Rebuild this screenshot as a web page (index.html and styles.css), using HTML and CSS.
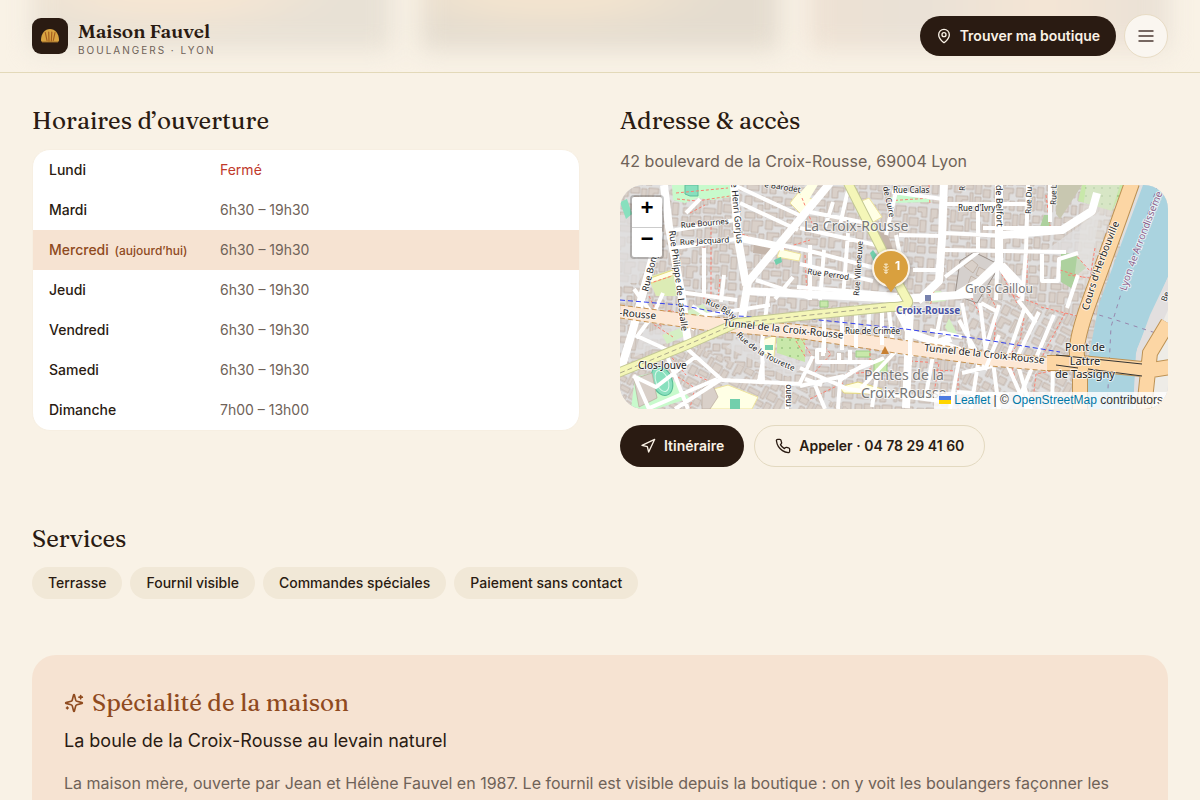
FILE: index.html
```html
<!DOCTYPE html>
<html lang="fr">
<head>
<meta charset="utf-8">
<meta name="viewport" content="width=device-width, initial-scale=1">
<title>Maison Fauvel – Croix-Rousse</title>
<link rel="stylesheet" href="styles.css">
</head>
<body>
<header class="site-header">
  <div class="header-glow" aria-hidden="true"><i class="glow-a"></i><i class="glow-b"></i><i class="glow-c"></i></div>
  <a class="brand" href="#">
    <svg class="brand-mark" viewBox="0 0 36 36" aria-hidden="true">
      <rect width="36" height="36" rx="9" fill="#2a1b12"/>
      <path d="M9 22c0-6.500 4-11 9-11s9 4.500 9 11c0 1.500-.8 2-2 2H11c-1.200 0-2-.5-2-2z" fill="#d9a441"/>
      <path d="M13.300 14.500l1.700 8M16.700 14.200l.3 8.800M19.800 14.200l-.5 8.800M23 14.500l-1.700 8" stroke="#a55f20" stroke-width="1.200" stroke-linecap="round"/>
      <path d="M10 24h16" stroke="#9b6a28" stroke-width="1"/>
    </svg>
    <span class="brand-text"><span class="brand-name">Maison Fauvel</span><span class="brand-sub">BOULANGERS · LYON</span></span>
  </a>
  <div class="header-actions">
    <a class="btn btn-dark btn-find" href="#"><svg class="icon" viewBox="0 0 24 24" aria-hidden="true"><path d="M20 10c0 4.990-5.540 10.190-7.400 11.800a1 1 0 0 1-1.200 0C9.540 20.190 4 14.990 4 10a8 8 0 0 1 16 0"/><circle cx="12" cy="10" r="3"/></svg>Trouver ma boutique</a>
    <button class="menu-btn" type="button" aria-label="Menu"><svg viewBox="0 0 24 24" aria-hidden="true"><path d="M3 6h18M3 12h18M3 18h18"/></svg></button>
  </div>
</header>
<main class="page">
  <div class="columns">
    <section>
      <h2>Horaires d’ouverture</h2>
      <div class="hours-card">
        <table class="hours">
          <tbody>
          <tr><th scope="row">Lundi</th><td class="closed">Fermé</td></tr>
          <tr><th scope="row">Mardi</th><td>6h30 – 19h30</td></tr>
          <tr class="today"><th scope="row">Mercredi <span>(aujourd’hui)</span></th><td>6h30 – 19h30</td></tr>
          <tr><th scope="row">Jeudi</th><td>6h30 – 19h30</td></tr>
          <tr><th scope="row">Vendredi</th><td>6h30 – 19h30</td></tr>
          <tr><th scope="row">Samedi</th><td>6h30 – 19h30</td></tr>
          <tr><th scope="row">Dimanche</th><td>7h00 – 13h00</td></tr>
          </tbody>
        </table>
      </div>
    </section>
    <section>
      <h2>Adresse &amp; accès</h2>
      <p class="address">42 boulevard de la Croix-Rousse, 69004 Lyon</p>
      <div class="map">
        <svg class="map-canvas" viewBox="0 0 548 224" preserveAspectRatio="xMidYMid slice" role="img" aria-label="Plan de la Croix-Rousse">
          <defs>
            <pattern id="bld" width="62" height="50" patternUnits="userSpaceOnUse" patternTransform="rotate(4)">
              <path class="bld" d="M2 2h7v9h-4v4H2zM11 1h9v6h-9zM22 2h5v12h-5zM29 1h10v5h-5v6h-5zM42 2h7v7h-7zM51 1h9v10h-5V6h-4zM3 18h10v6H3zM15 10h5v13h-5zM23 17h12v5H23zM37 9h4v13h-4zM43 12h9v8h-9zM54 14h6v12h-6zM2 27h6v10H2zM10 26h11v5h-4v7h-7zM24 25h7v9h-7zM33 25h10v5H33zM45 23h6v11h-6zM53 29h7v8h-7zM3 40h12v6H3zM18 39h5v9h-5zM26 37h12v4h-6v7h-6zM40 33h3v14h-3zM45 37h6v9h-6zM53 40h8v7h-8z"/>
            </pattern>
            <pattern id="bldTilt" width="62" height="50" patternUnits="userSpaceOnUse" patternTransform="rotate(28)" href="#bld"/>
            <pattern id="trees" width="8" height="8" patternUnits="userSpaceOnUse"><circle cx="2" cy="3" r=".8" fill="#7cae66"/></pattern>
            <path id="p-lassalle" d="M49 46C53 76 58 112 64 170"/>
            <path id="p-gorjus" d="M111 -2L120 90"/>
            <path id="p-bely" d="M85 119Q104 124 120 142"/>
            <path id="p-tourette" d="M116 150Q135 173 190 192"/>
            <path id="p-herb" d="M467 132Q479 81 516 0"/>
            <path id="p-river" d="M506 106Q522 57 554 -20"/>
          </defs>
          <rect width="548" height="224" fill="#e0dfdf"/>
          <rect width="500" height="224" fill="url(#bld)"/>
          <path d="M0 188L65 158 230 224H0zM350 110L460 130V224H340z" fill="#e0dfdf"/>
          <path d="M0 188L65 158 230 224H0zM350 110L460 130V224H340z" fill="url(#bldTilt)"/>
          <path d="M0 30h44l-4 28-22 40H0zM122 150l66 30-20 12-62-30zM425 66l55-40-10 60-14 0-14-14zM20 150l40-14 0 16-46 20z" fill="#e0dfdf" opacity=".75"/>

          <!-- parks, schools and open ground -->
          <path d="M52 0h59v12l-19 3-15-2-12 5-12-3z" fill="#c8facc"/>
          <path d="M65 0h13v11h-8l-5-2z" fill="#88e0be" stroke="#5fbd9b"/>
          <path d="M0 17l7-3 5 15-6 5z" fill="#88e0be"/>
          <path d="M28 92l29-9 5 28H36z" fill="#dcecb5"/><path d="M28 94l25-9 1 5-25 9z" fill="#ffffe5" stroke="#e8d780"/>
          <path d="M170 18l8-10 18 8-13 15zM157 72l3-8 21 5-2 7zM239 17l10-4 13 19-14 8z" fill="#ffffe5" stroke="#eee39b"/>
          <path d="M180 8l9-10h10l-14 23z" fill="#ffffe5"/>
          <path d="M270 13l8-5 28 3 6 6-40 1z" fill="#c8facc"/>
          <path d="M437 0h25l-22 34-4-5z" fill="#c8c7b0"/>
          <path d="M462 0h43l-13 26-34-10z" fill="#c8e8aa"/><path d="M462 0h43l-13 26-34-10z" fill="url(#trees)"/>
          <path d="M424 30h6v15h-11zM441 68l15 1 10 14-8 6-7 14-10-6z" fill="#add19e"/>
          <path d="M15 192l28-7 27 28-34 11H11z" fill="#c8facc"/>
          <ellipse cx="42" cy="196" rx="10" ry="15" transform="rotate(-22 42 196)" fill="#88e0be" stroke="#59bd98"/>
          <ellipse cx="42" cy="196" rx="6" ry="11" transform="rotate(-22 42 196)" fill="none" stroke="#d7f7e8"/>
          <path d="M157 153h28v24l-28-9z" fill="#c8e8aa"/><path d="M157 153h28v24l-28-9z" fill="url(#trees)"/>
          <path d="M142 155l14-5-2 22-14-4zM90 205l18-5 30 12-6 12H90z" fill="#ffffe5" stroke="#eee39b"/>
          <path d="M110 214h10v10h-10zM145 160h8v5h-8zM253 65l5 7-4 5-4-9zM154 75l7-3 1 5-6 3z" fill="#72cfac"/>
          <path d="M219 202l19-5 24 7-4 5-34-1z" fill="#ffffe5" stroke="#e5d780"/>
          <path d="M254 175h13v12h-13zM236 166h14v6h-14zM200 116h8v6h-8z" fill="#c8e8aa" stroke="#9ccc88"/>
          <path d="M312 106l9 0 5 10-17 2zM329 133l8 15-6 4-6-10zM65 127l18-8 6 9-16 5zM42 150l21-8 4 8-20 9z" fill="#d5efc4"/>
          <path d="M466 0L500 0 467 105 455 88z" fill="#e6e3df" opacity=".5"/>
          <path d="M340 76l14-9 26 13-23 38-22-8z" fill="#d5d0cd" stroke="#998f88"/>
          <path d="M344 81l8-6 6 5-5 8zM359 82l8 4-3 7-8-3zM351 91l7 4-3 8-7-4z" class="bld"/>
          <path d="M134 58l17 3-2 9-16-2zM255 45l13 5 9 27-9 5-10-19z" fill="#c4b5aa"/>
          <path d="M14 194l18-6 5 25-18 9zM82 204l9-8 7 16-8 12h-8z" class="bld"/>

          <!-- river -->
          <path d="M523 0h25v92L530 130l-14 38-3 56h-46l2-54 10-51z" fill="#aad3df"/>
          <path d="M548 92v132h-35l4-60z" fill="#e2dfdf"/>
          <path d="M528 224v-54l20-45v99z" fill="#eeece7"/>
          <path d="M538 0Q512 70 491 142L487 224" class="admin"/>
          <path d="M462 125l34 10 52 17" class="admin"/>

          <!-- footpaths -->
          <g class="foot">
            <path d="M56 8l52-5M57 14l20 2 33-5M72 39l19-3v77M84 62v52M94 117l-8-4M70 28l15-8M29 111l8 17 15-3 12 15M38 126l-5 13 20 13M49 169l17 21M46 164l15-6M24 100l28-9M100 94l-2 20M122 49l39 15 29-9M182 13l12 30M185 70l2 42M191 67l-4 47M265 16l46-3M282 50l41 2M309 0l1 20M325 18v28M318 92l-8 29M407 0v105M426 10l5 38M475 63l-5 30-22-3M440 85l22 7M454 68l16 18M387 108l33 12M377 80l21 40M421 122l48 12M445 128l-25 48M404 133l-4 22-13 20M376 132l-2 28M330 113l21-5M310 185l28 1v38M290 176l29 2-5 30M250 163v24l-24 2M181 153l13 22M198 155l13 14-17 19M190 214l33-16M58 192l17 11-5 20M75 190l14 6M27 130l16 12M176 156l10 17M349 108l12 23M366 104l11 20M436 185l-20 4-4 35M391 178l7 26"/>
          </g>
          <!-- residential streets -->
          <g class="street">
            <path d="M50 46l65-11M54 63l62-9 48 10M66 28l14-14M122 52l68 14 65 17M120 18l58 27M114 0l65 30M190 27l67 13M180 43l76 17M180 79l73 17M136 95l54 18M60 107l57 8M84 63v47M104 90l-3 27M173 92l-18 22M190 60v55M204 65l-4 50M228 48l-5 65M220 40l8-35M205 42l8-25M177 102l100 8M279 50l44 1M266 50l11-48M272 7l51 7M276 50l7 35M293 85h31M324 19h82M323 48l85 4M324 65l122 2M408 0l-2 65M430 0v37M358 22v45M363 43h78M378 65l-2 50M358 67l-33 25M406 66l-4 50M422 67v29h16l1-22 19-6M458 90l-11 33M383 79l20 21M361 118l15 8M379 120l-14 45M398 115l18 23M405 122l-20 57M419 127l-24 49M434 130l-33 79M342 118l9 48M360 118l6 50"/>
            <path d="M14 104l19 26-17 23M17 151l35 16M33 130l10-22M72 121l14 9 64-10M81 130l-9 15M149 105l-7 52 1 41M204 128l-1 43M222 125v40M236 120v43M262 118v40M249 126l-1 34M203 165h-6v12h22v-9M219 177h34M230 187l34-14M230 165v14M193 171l-13 27M180 201l44-10M195 200l10 24M268 118l6 50-33 35M64 161l38 34 79 4M75 172l-39 30-23-11M97 194l-70 30M46 168l22 56M14 190l15 34M100 195l-45 29M139 196l4-20M167 198v26M185 194l17 6M180 183l48 21 92 12M218 224l2-29 25-16M252 222l6-38M321 128l-5 25-14 10M316 153l-11 63M339 135l25 46M310 145l32 7M341 164l-11 60M359 172l-8 52M373 177l6 47M387 179l20 45M342 188l43-10M337 207l52 3M397 177l14 47M433 180l-1 44"/>
          </g>
          <g class="avenue">
            <path d="M44 0l5 42 13 70 6 46M40 46l-16 58-12 44-12 39M114 0l4 54 8 46M210-2l-82 99-7 42M324-2l-2 55-3 43-21 20M126 106l155 8 72-5M379 0v78l-20 19-22 13M380 80l22 30M382 50l60-5 30-19 5-18M290 123l-4 100M286 170l45-17M278 125l12 23 53 19"/>
          </g>
          <path d="M0 127L83 138 183 147 282 162 370 174 435 180" fill="none" stroke="#fde8d5" stroke-width="13"/>
          <path d="M0 120L83 131 183 140 282 155 370 167 435 173M0 133L83 145 183 154 282 169 370 181 430 186" class="tunnel-edge"/>
          <g fill="none" stroke="#fff" stroke-width="4"><path d="M204 138v30M222 140v25M236 140v22M262 140v20M290 140v40M379 150l-14 35"/></g>
          <path d="M0 115L60 120 116 131 190 134 285 144 360 154 440 167" class="rail"/>
          <g fill="none" stroke="#c3c894" stroke-width="10"><path d="M228-2l33 65 13 28 14 25Q290 122 270 122L190 130 117 138 67 160-2 188"/></g>
          <g fill="none" stroke="#f4f6b8" stroke-width="8"><path d="M228-2l33 65 13 28 14 25Q290 122 270 122L190 130 117 138 67 160-2 188"/></g>
          <path d="M266 122L190 130 117 138 67 160 0 188" fill="none" stroke="#aaa78b" stroke-dasharray="5 3"/>
          <path d="M512-2Q492 55 471 112T460 178V226M548 138l-18 30-6 56M427 178l34 0 71 7 18-3" fill="none" stroke="#bd9254" stroke-width="16"/>
          <path d="M512-2Q492 55 471 112T460 178V226M548 138l-18 30-6 56M427 178l34 0 71 7 18-3" fill="none" stroke="#fcd6a4" stroke-width="14"/>
          <path d="M436 170l86 9M436 180l22 3M468 184l54 7" stroke="#333"/>
          <path d="M265 161l4 8h-8z" fill="#c77f31"/>
          <rect x="305" y="110" width="6" height="6" fill="#7882ad"/>

          <g class="street-label">
            <text font-size="9"><textPath href="#p-gorjus">e Henri Gorjus</textPath></text>
            <text font-size="9"><textPath href="#p-lassalle">Rue Philippe de Lassalle</textPath></text>
            <text transform="translate(28 107) rotate(-76)" font-size="9">Rue Bony</text>
            <text transform="translate(61 43) rotate(-5)">Rue Bournes</text>
            <text transform="translate(60 60) rotate(-3)">Rue Jacquard</text>
            <text transform="translate(144 2) rotate(9)">e Barodet</text>
            <text transform="translate(187 89) rotate(8)">Rue Perrod</text>
            <text transform="translate(239 111) rotate(-86)">Rue Villeneuve</text>
            <text transform="translate(263 2) rotate(78)">de Cuire</text>
            <text x="273" y="8">Rue Calas</text>
            <text x="338" y="26">Rue d'Ivry</text>
            <text transform="translate(376 0) rotate(89)" font-size="9">de Belfort</text>
            <text transform="translate(411 29) rotate(-88)">Rue Du</text>
            <text transform="translate(436 20) rotate(-88)">Rue L</text>
            <text transform="translate(345 6) rotate(-88)">R</text>
            <text><textPath href="#p-bely">Rue Bély</textPath></text>
            <text><textPath href="#p-tourette">Rue de la Tourette</textPath></text>
            <text x="225" y="149">Rue de Crimée</text>
            <text transform="translate(171 222) rotate(-90)">rnano</text>
            <text transform="translate(546 117) rotate(-68)">Be</text>
          </g>
          <g class="road-label">
            <text transform="translate(-1 131) rotate(5)">-Rousse</text>
            <text transform="translate(103 141) rotate(6)">Tunnel de la Croix-Rousse</text>
            <text transform="translate(304 166) rotate(6)">Tunnel de la Croix-Rousse</text>
            <text><textPath href="#p-herb" startOffset="7">Cours d'Herbouville</textPath></text>
            <text x="18" y="184">Clos-Jouve</text>
            <text text-anchor="middle" font-size="11"><tspan x="465" y="166">Pont de</tspan><tspan x="465" y="180">Lattre</tspan><tspan x="465" y="193">de Tassigny</tspan></text>
          </g>
          <text class="admin-label"><textPath href="#p-river">Lyon 4e Arrondisseme</textPath></text>
          <g class="place-label">
            <text x="184" y="46">La Croix-Rousse</text>
            <text x="345" y="108" class="place-small">Gros Caillou</text>
            <text x="244" y="195">Pentes de la</text>
            <text x="241" y="213">Croix-Rousse</text>
          </g>
          <text class="station-label" x="276" y="129">Croix-Rousse</text>
        </svg>
        <div class="zoom-control"><button type="button" aria-label="Zoom avant">+</button><button type="button" aria-label="Zoom arrière">−</button></div>
        <div class="map-pin">
          <svg viewBox="0 0 40 46" aria-hidden="true"><path d="M20 44l-7-10h14z" fill="#d9a03e"/><circle cx="20" cy="20" r="18" fill="#d9a03e" stroke="#fbf3e5" stroke-width="2"/><path d="M14 36h12l-6 8z" fill="#d9a03e"/><path d="M15 15v11M15 17l-2-1M15 17l2-1M15 20l-2.500-1.500M15 20l2.500-1.500M15 23l-2.500-1.500M15 23l2.500-1.500M15 25l-2-1M15 25l2-1" stroke="#f7e8c8" fill="none"/></svg><span>1</span>
        </div>
        <div class="attribution"><a href="#"><svg viewBox="0 0 12 8" aria-hidden="true"><path fill="#4c7be1" d="M0 0h12v4H0z"/><path fill="#ffd500" d="M0 4h12v4H0z"/></svg> Leaflet</a> | © <a href="#">OpenStreetMap</a> contributors</div>
      </div>
      <div class="actions">
        <a class="btn btn-dark" href="#"><svg class="icon" viewBox="0 0 24 24" aria-hidden="true"><path d="M3 11L22 2l-9 19-2-8z"/></svg>Itinéraire</a>
        <a class="btn btn-outline" href="#"><svg class="icon" viewBox="0 0 24 24" aria-hidden="true"><path d="M22 16.920v3a2 2 0 0 1-2.180 2 19.790 19.790 0 0 1-8.630-3.070 19.500 19.500 0 0 1-6-6A19.790 19.790 0 0 1 2.120 4.180 2 2 0 0 1 4.110 2h3a2 2 0 0 1 2 1.720c.127.960.361 1.903.7 2.810a2 2 0 0 1-.45 2.110L8.090 9.910a16 16 0 0 0 6 6l1.270-1.270a2 2 0 0 1 2.110-.45c.907.339 1.850.573 2.810.7A2 2 0 0 1 22 16.920z"/></svg>Appeler · 04 78 29 41 60</a>
      </div>
    </section>
  </div>
  <section class="services">
    <h2>Services</h2>
    <ul class="chips"><li>Terrasse</li><li>Fournil visible</li><li>Commandes spéciales</li><li>Paiement sans contact</li></ul>
  </section>
  <section class="special">
    <h2><svg class="icon" viewBox="0 0 24 24" aria-hidden="true"><path d="M9.937 15.500A2 2 0 0 0 8.500 14.063l-6.135-1.582a.5.5 0 0 1 0-.962L8.500 9.936A2 2 0 0 0 9.937 8.500l1.582-6.135a.5.5 0 0 1 .963 0L14.063 8.500A2 2 0 0 0 15.500 9.937l6.135 1.581a.5.5 0 0 1 0 .964L15.500 14.063a2 2 0 0 0-1.437 1.437l-1.582 6.135a.5.5 0 0 1-.963 0zM20 3v4M22 5h-4M4 17v2M5 18H3"/></svg>Spécialité de la maison</h2>
    <p class="special-name">La boule de la Croix-Rousse au levain naturel</p>
    <p class="special-text">La maison mère, ouverte par Jean et Hélène Fauvel en 1987. Le fournil est visible depuis la boutique : on y voit les boulangers façonner les</p>
  </section>
</main>
</body>
</html>
```
FILE: styles.css
```css
* { box-sizing: border-box; }
body { margin: 0; background: #f9f2e6; color: #2a1b12; font: 14px/20px Inter, "Liberation Sans", sans-serif; }
a { color: inherit; text-decoration: none; }
h2, p, ul { margin: 0; padding: 0; }
h2 { font: 400 24px/32px Fraunces, "Liberation Serif", serif; }

.site-header { position: sticky; top: 0; z-index: 10; display: flex; align-items: center; justify-content: space-between; height: 73px; padding: 0 32px; border-bottom: 1px solid #e3d9b9; background: #f9f2e6; overflow: hidden; }
.header-glow { position: absolute; inset: -40px 32px 22px; display: grid; grid-template-columns: repeat(3, 1fr); gap: 28px; filter: blur(12px); }
.glow-a { background: radial-gradient(ellipse at 38% 35%, #f6e6d3 20%, #e8e1d5 55%); }
.glow-b { background: radial-gradient(ellipse at 36% 35%, #f3e4cf 20%, #e4dccf 55%); }
.glow-c { background: linear-gradient(90deg, #eee1d3, #e9e1d6 30%, #f4e5d5 65%, #e9e1d6); }
.brand, .header-actions { position: relative; display: flex; align-items: center; }
.brand { gap: 10px; }
.brand-mark { width: 36px; height: 36px; }
.brand-text { display: grid; }
.brand-name { font: 600 19px/28px Fraunces, "Liberation Serif", serif; }
.brand-sub { color: #6f6258; font-size: 10px; line-height: 10px; letter-spacing: 2px; }
.header-actions { gap: 8px; }
.btn { display: inline-flex; align-items: center; gap: 8px; height: 42px; padding: 0 20px; border-radius: 21px; font-weight: 600; }
.btn-dark { background: #2a1b12; color: #faf2e6; }
.btn-outline { border: 1px solid #e3d9c0; }
.btn-find { height: 40px; padding: 0 16px; }
.icon { width: 16px; height: 16px; fill: none; stroke: currentColor; stroke-width: 2; stroke-linecap: round; stroke-linejoin: round; }
.menu-btn { display: grid; place-items: center; width: 44px; height: 44px; padding: 0; border: 1px solid #e8dcc5; border-radius: 50%; background: #faf6f0; color: #4b3932; }
.menu-btn svg { width: 20px; height: 20px; fill: none; stroke: currentColor; stroke-width: 2; }

.page { padding: 32px 32px 0; }
.columns { display: grid; grid-template-columns: 1fr 1fr; gap: 40px; }
.hours-card { margin-top: 12px; border: 1px solid #f7efe2; border-radius: 18px; background: #fff; overflow: hidden; }
.hours { width: 100%; border-collapse: collapse; }
.hours th, .hours td { height: 40px; padding: 0 16px; text-align: left; }
.hours th { width: 171px; padding-right: 0; font-weight: 500; white-space: nowrap; }
.hours th span { margin-left: 2px; font-size: 12px; }
.hours td { color: #6f6258; }
.hours .closed { color: #c0392b; }
.today { background: #f6e3d2; }
.today th { color: #8f4a1e; }
.address { margin-top: 12px; color: #6f6258; font-size: 16px; line-height: 24px; }

.map { position: relative; height: 224px; margin-top: 12px; border-radius: 24px; overflow: hidden; background: #e0dfdf; }
.map-canvas { display: block; width: 100%; height: 100%; font-family: "Noto Sans", sans-serif; }
.map-canvas text { paint-order: stroke; stroke: #fff; stroke-opacity: .7; stroke-width: 2px; stroke-linejoin: round; }
.bld { fill: #d9d0c9; stroke: #b9a99c; stroke-width: .7; }
.street { fill: none; stroke: #fff; stroke-width: 4; stroke-linejoin: round; }
.avenue { fill: none; stroke: #fff; stroke-width: 8; stroke-linejoin: round; }
.foot { fill: none; stroke: #fa8072; stroke-width: 1; stroke-dasharray: 3 2; }
.tunnel-edge { fill: none; stroke: #c99452; stroke-dasharray: 5 3; }
.rail { fill: none; stroke: #3441ef; stroke-width: 1; stroke-dasharray: 5 3; }
.admin { fill: none; stroke: #9785ac; stroke-dasharray: 4 5; }
.street-label { font-size: 8px; fill: #222; }
.road-label { font-size: 10px; fill: #222; }
.admin-label { font-size: 10px; fill: #8d618b; }
.place-label { font-size: 14px; fill: #777; }
.place-label .place-small { font-size: 12px; }
.map-canvas .station-label { font-size: 10px; font-weight: 700; fill: #4752a5; }
.zoom-control { position: absolute; top: 10px; left: 10px; display: grid; border: 2px solid rgb(0 0 0 / 20%); border-radius: 4px; background: #fff; background-clip: padding-box; }
.zoom-control button { width: 30px; height: 30px; padding: 0 0 4px; border: 0; background: none; color: #000; font: 700 22px/24px "Liberation Mono", monospace; }
.zoom-control button + button { border-top: 1px solid #ccc; }
.map-pin { position: absolute; top: 63px; left: 251px; width: 40px; height: 46px; filter: drop-shadow(0 1px 2px rgb(0 0 0 / 30%)); }
.map-pin svg { display: block; width: 100%; }
.map-pin span { position: absolute; top: 8px; left: 24px; color: #fff; font-size: 12px; font-weight: 700; }
.attribution { position: absolute; right: 0; bottom: 0; padding: 0 5px; background: rgb(255 255 255 / 80%); color: #333; font: 12px/17px "Liberation Sans", Arial, sans-serif; }
.attribution a { color: #0078a8; }
.attribution svg { width: 12px; height: 8px; }
.actions { display: flex; gap: 10px; margin-top: 16px; }

.services { margin-top: 56px; }
.chips { display: flex; flex-wrap: wrap; gap: 8px; margin-top: 12px; list-style: none; }
.chips li { padding: 6px 16px; border-radius: 16px; background: #f1e8d7; font-weight: 500; }
.special { margin-top: 56px; padding: 32px; border-radius: 24px; background: #f6e3d2; }
.special h2 { display: flex; align-items: center; gap: 8px; color: #8f4a1e; }
.special h2 .icon { width: 20px; height: 20px; }
.special-name { margin-top: 8px; font-size: 18px; line-height: 28px; }
.special-text { margin-top: 16px; color: #6f6258; font-size: 16px; line-height: 24px; }
```
